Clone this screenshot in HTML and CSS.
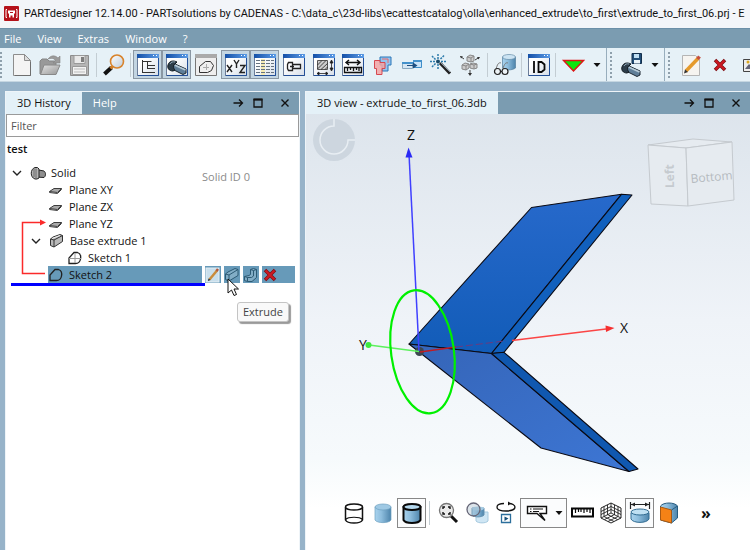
FILE: index.html
```html
<!DOCTYPE html>
<html lang="en">
<head>
<meta charset="utf-8">
<title>PARTdesigner</title>
<link rel="stylesheet" href="styles.css">
</head>
<body>
<svg class="defs" aria-hidden="true">
  <defs>
    <linearGradient id="gBar" x1="0" x2="1" y1="0" y2="0"><stop offset="0" stop-color="#1450a8"/><stop offset="1" stop-color="#5b9be6"/></linearGradient>
    <linearGradient id="gPage" x1="0" x2="1" y1="0" y2="1"><stop offset="0.3" stop-color="#fff"/><stop offset="1" stop-color="#d6dee8"/></linearGradient>
    <linearGradient id="gGrey" x1="0" x2="1" y1="0" y2="1"><stop offset="0" stop-color="#e4e4e4"/><stop offset="1" stop-color="#979797"/></linearGradient>
    <linearGradient id="gCyl" x1="0" x2="1" y1="0" y2="0"><stop offset="0" stop-color="#a9d3ee"/><stop offset="0.4" stop-color="#8dbddd"/><stop offset="1" stop-color="#4d84ab"/></linearGradient>
    <linearGradient id="gLens" x1="0" x2="1" y1="0" y2="1"><stop offset="0" stop-color="#fff"/><stop offset="1" stop-color="#bccbd8"/></linearGradient>
    <symbol id="win" viewBox="0 0 24 24">
      <rect x="1.5" y="1.5" width="21" height="21" fill="url(#gPage)" stroke="#6b7c98"/>
      <path d="M22.5 3v19.5H2" fill="none" stroke="#234f97"/>
      <rect x="1" y="1" width="22" height="4" fill="url(#gBar)"/>
      <path d="M17 2.5h1M20 2.5h1" stroke="#fff"/>
    </symbol>
    <symbol id="screw" viewBox="0 0 24 24">
      <path d="M9 9.500 21 15v4l-3 1.500L7 15z" fill="#5f7e98" stroke="#1c2730"/>
      <path d="M9.500 11 20.500 16" stroke="#b7cbd8" stroke-width="1.500"/>
      <path d="M3 11c1-4 5-5 9-3l-2 2c-2 1-2 4 0 6l-2 1c-4 0-6-3-5-6z" fill="#2c3c48" stroke="#111a20"/>
      <path d="M5 10c1-2 3-2.500 5-2" stroke="#91a9ba" fill="none"/>
    </symbol>
    <symbol id="plane" viewBox="0 0 16 16"><path d="M1.500 9.500 6 6.500h7.500l-4 4z" fill="#a9a9a9" stroke="#3e3e3e"/><path d="M1.500 9.500v1l8 1 4-4v-1" fill="none" stroke="#3e3e3e"/></symbol>
    <symbol id="block" viewBox="0 0 16 16"><path d="M1.500 6 4 4l7-2.500 2.500 1v6L5 14l-3.500-1.500z" fill="#b9b9b9" stroke="#333"/><path d="M1.500 6 5 7v7M5 7l8.500-4.500" fill="none" stroke="#333"/><path d="M3 5.500 11 2.500" stroke="#eee"/></symbol>
    <symbol id="sketch" viewBox="0 0 16 16"><path d="M2 13.500V8l5-5.500h3.500c3 1 3.500 4 3 6.500-.5 3-2.500 4.500-5 4.500z" fill="none" stroke="#222" stroke-width="1.300"/></symbol>
    <symbol id="pencil" viewBox="0 0 16 16"><rect x="1" y="1" width="13" height="14" fill="#c9dfec" stroke="#e4eef4"/><path d="M4.500 12.500 12 3.500" stroke="#c98c3c" stroke-width="2.500"/><path d="m3 14 .5-2.500 2 1.500z" fill="#222"/><path d="m11.500 4 1.500-2" stroke="#b4583a" stroke-width="2.500"/></symbol>
    <symbol id="cross" viewBox="0 0 16 16"><path d="m3 3 10 10M13 3 3 13" stroke="#7d0c12" stroke-width="3.500"/><path d="m3.500 3.500 9 9M12.500 3.500l-9 9" stroke="#cc1922" stroke-width="2.200"/></symbol>
    <symbol id="dock" viewBox="0 0 12 12"><path d="M1.500 6h9M7 2.500 10.500 6 7 9.500" fill="none" stroke="#111" stroke-width="1.300"/></symbol>
    <symbol id="maxi" viewBox="0 0 12 12"><path d="M2 2.500h8v7.500H2z" fill="none" stroke="#111" stroke-width="1.300"/><path d="M1.500 2.500h9" stroke="#111" stroke-width="2"/></symbol>
    <symbol id="close" viewBox="0 0 12 12"><path d="m2.500 2.500 7 7M9.500 2.500l-7 7" stroke="#111" stroke-width="1.400"/></symbol>
    <symbol id="drop" viewBox="0 0 8 8"><path d="M.5 2h7L4 6z" fill="#111"/></symbol>
  </defs>
</svg>

<header class="titlebar">
  <svg class="logo" viewBox="0 0 16 16"><rect width="15" height="15" rx="1" fill="#b5121b"/><path d="M3 3.500H2v8h1M12 3.500h1v8h-1" fill="none" stroke="#fff"/><path d="M4 4.500h7v3h-1v4H8.500v-2h-2v2H5v-4H4z" fill="#fff"/><path d="M6 6.500h3" stroke="#b5121b"/></svg>
  <h1 class="title">PARTdesigner 12.14.00 - PARTsolutions by CADENAS - C:\data_c\23d-libs\ecattestcatalog\olla\enhanced_extrude\to_first\extrude_to_first_06.prj - E</h1>
</header>

<nav class="menubar">
  <button>File</button><button>View</button><button>Extras</button><button>Window</button><button>?</button>
</nav>

<div class="toolbars">
  <div class="toolbar">
    <span class="grip"></span>
    <div class="group">
      <button class="tool" aria-label="New"><svg viewBox="0 0 24 24"><path d="M4.500 1.500h11l6 6v15h-17z" fill="#f4f4f4" stroke="#8d8d8d"/><path d="M15.500 1.500v6h6z" fill="#ddd" stroke="#8d8d8d"/><path d="M6 22.500h15.500V9" fill="none" stroke="#6f6f6f"/></svg></button>
      <button class="tool" aria-label="Open"><svg viewBox="0 0 24 24"><path d="M2 21V8l2-2h5l2 2h7v5z" fill="#999" stroke="#858585"/><path d="M2.500 21.500 6 12h16l-4 9.500z" fill="url(#gGrey)" stroke="#888"/><path d="M10 6c3-4 7-4 10-1l2-2v7h-7l2.500-2.500C16 5 13 5 10 6z" fill="#9b9b9b" stroke="#858585" stroke-width=".6"/></svg></button>
      <button class="tool" aria-label="Save"><svg viewBox="0 0 24 24"><path d="M3.500 2.500h18v20h-18z" fill="#b5b5b5" stroke="#8c8c8c"/><path d="M7 2.500h11v8H7z" fill="#e9e9e9" stroke="#999"/><path d="M14 4h3v5h-3z" fill="#7d7d7d"/><path d="M5.500 13.500h14v8h-14z" fill="#f2f2f2" stroke="#999"/><path d="M7 16h11M7 19h11" stroke="#bbb"/></svg></button>
    </div>
    <span class="sep"></span>
    <button class="tool" aria-label="Search"><svg viewBox="0 0 24 24"><path d="m9.500 14.500-7 6.500" stroke="#111" stroke-width="4"/><path d="m10.500 13.500-2 2" stroke="#d07e27" stroke-width="3"/><circle cx="15" cy="8.500" r="6.500" fill="url(#gLens)" stroke="#d8832b" stroke-width="1.600"/></svg></button>
    <span class="sep"></span>
    <div class="group">
      <button class="tool on" aria-label="History tree"><svg viewBox="0 0 24 24"><use href="#win"/><path d="M6.500 7v13M6.500 8.500h9M6.500 19.500H19M11.500 9v7M11.500 12.500H19M11.500 15.500H19" fill="none" stroke="#333"/></svg></button>
      <button class="tool on" aria-label="3D view"><svg viewBox="0 0 24 24"><use href="#win"/><use href="#screw" x="0" y="1"/></svg></button>
      <button class="tool" aria-label="Sketch view"><svg viewBox="0 0 24 24"><path d="M1.500 1.500h21v21h-21z" fill="#eee" stroke="#777"/><path d="M1 1h22v4H1z" fill="#aaa"/><path d="M5.500 19.500v-6l6-5h5l3 4-2 5-4 2z" fill="none" stroke="#333"/><path d="M12.500 11v6M9 14.500h6" stroke="#aaa"/></svg></button>
    </div>
    <div class="group">
      <button class="tool on" aria-label="Variables"><svg viewBox="0 0 24 24"><use href="#win"/><path d="m3 12 5 7M8 12l-5 7M10 7l2.500 4L15 7M12.500 11v4M16 12.500h5l-5 7h5" fill="none" stroke="#222" stroke-width="1.400"/></svg></button>
      <button class="tool on" aria-label="Table"><svg viewBox="0 0 24 24"><use href="#win"/><path d="M8 6h4v16H8z" fill="#f5ebb5"/><path d="M3 7.500h18M3 10.500h18M3 13.500h18M3 16.500h18M3 19.500h18" stroke="#66727f" stroke-dasharray="4 1"/></svg></button>
      <button class="tool" aria-label="Bolt"><svg viewBox="0 0 24 24"><use href="#win"/><path d="M6.500 9.500h4v8h-4l-1-2v-4zM10.500 11.500h8v4h-8M8 13.500h4" fill="none" stroke="#222" stroke-width="1.300"/></svg></button>
    </div>
    <div class="group">
      <button class="tool" aria-label="Hatching"><svg viewBox="0 0 24 24"><use href="#win"/><path d="M5.500 7.500h10v9h-10z" fill="#ccc" stroke="#555"/><path d="m5.500 12 4.500-4.500M5.500 16 14 7.500M9 16.500l6.500-6M13 16.500l2.500-2.500M5 20.500h11M5 20.500l2-1.500v3zM16 20.500l-2-1.500v3zM19.500 8v9M19.500 7 18 10h3zM19.500 18 18 15h3z" stroke="#222" stroke-width=".8"/></svg></button>
      <button class="tool" aria-label="Measure"><svg viewBox="0 0 24 24"><use href="#win"/><path d="M5 9.500h14M8 7 5 9.500 8 12M16 7l3 2.500L16 12" fill="none" stroke="#111" stroke-width="1.400"/><path d="M3.500 14.500h17v5h-17zM6.500 15v3M9.500 15v2M12.500 15v3M15.500 15v2M18 15v3" fill="none" stroke="#111" stroke-width="1.300"/></svg></button>
      <button class="tool" aria-label="Compare"><svg viewBox="0 0 24 24"><path d="M10 4h11v8h-3v6h-6v-6h-2z" fill="#95c3ee" stroke="#2a77b8"/><path d="M4.500 7.500H10v2h5v6h-3v6H6.500v-6h-2z" fill="#f2a5a5" fill-opacity=".85" stroke="#d64850"/><path d="M12 6h6v4" fill="none" stroke="#e86b6b"/></svg></button>
    </div>
    <div class="group">
      <button class="tool" aria-label="Connect"><svg viewBox="0 0 24 24"><path d="M2.500 9.500h10v6h-10z" fill="#d5e6f3" stroke="#89a8bf"/><path d="M13.500 7.500h8v7h-8z" fill="#c9e3f8" stroke="#3d8ec9"/><path d="M2 10h11M13 8h9" stroke="#4491cb" stroke-width="2"/><path d="M7 12h6V9.500l4.500 3-4.500 3V13H7z" fill="#1d4e80"/></svg></button>
      <button class="tool" aria-label="Wizard"><svg viewBox="0 0 24 24"><path d="m11 10 10 10.500" stroke="#222" stroke-width="3"/><path d="m12 10 9 9" stroke="#8b98a2"/><path d="M9 1v5M9 11v5M1 8.500h5M12 8.500h6M3 3l4 4M15 2.500 11 6.500M3 14l4-4" stroke="#2d7bab" stroke-width="1.500" stroke-dasharray="2 1"/><circle cx="9" cy="8.500" r="2" fill="#174968"/></svg></button>
      <button class="tool" aria-label="Explode"><svg viewBox="0 0 24 24"><path d="m9 4 3-2 4 1v5l-3 1-4-1zM4 12l3-2 4 1v4l-3 2-4-1zM12 11l3-1 4 1v4l-3 1-4-1z" fill="#ccc" stroke="#888"/><path d="m9 4 4 1 3-2M13 5v4M4 12l4 1 3-2M8 13v4M12 11l4 1 3-1M16 12v4" fill="none" stroke="#888"/><path d="M6 6 2.500 3.500M17 7l4-2.500M12 17v4" stroke="#444"/><path d="m2 3 3 .5-2 2zM22 4l-3 0 1.500 2.500zM12 23l-2-3h4z" fill="#333"/></svg></button>
    </div>
    <span class="sep"></span>
    <button class="tool" aria-label="Inspect"><svg viewBox="0 0 24 24"><path d="M9.500 4v11c2 2.500 10 2.500 13 0V4z" fill="url(#gCyl)" stroke="#557f9d" stroke-width=".7"/><ellipse cx="16" cy="4" rx="6.500" ry="2.500" fill="#cce4f3" stroke="#668ca8" stroke-width=".7"/><path d="M3 17c1-6 3-8 5-7M10 16c1-5 3-7 5-6" fill="none" stroke="#777"/><circle cx="4.500" cy="18.500" r="3" fill="#edf3f6" stroke="#222" stroke-width="1.200"/><circle cx="12" cy="18.500" r="3" fill="#edf3f6" stroke="#222" stroke-width="1.200"/><path d="M7.500 18.500H9" stroke="#222"/></svg></button>
    <span class="sep"></span>
    <button class="tool" aria-label="ID"><svg viewBox="0 0 24 24"><use href="#win"/><path d="M7 8v12M11.500 9v10h3l3-2.500v-5l-3-2.500z" fill="none" stroke="#080808" stroke-width="1.800"/></svg></button>
    <span class="sep"></span>
    <button class="tool" aria-label="Filter state"><svg viewBox="0 0 24 24"><path d="M2.500 7.500h20L12.500 18z" fill="#0de70d" stroke="#dd1616" stroke-width="1.400"/></svg></button>
    <button class="tool narrow" aria-label="More states"><svg viewBox="0 0 8 8"><use href="#drop"/></svg></button>
  </div>
  <div class="toolbar">
    <span class="grip"></span>
    <button class="tool" aria-label="Export part"><svg viewBox="0 0 24 24"><use href="#screw" y="3"/><path d="M13 .5h9.500v10H13z" fill="#224e78" stroke="#132f4c"/><path d="M15 1h5v4h-5z" fill="#bfdef2"/><path d="M15 7h6v3.500h-6z" fill="#eaf3f8"/></svg></button>
    <button class="tool narrow" aria-label="Export formats"><svg viewBox="0 0 8 8"><use href="#drop"/></svg></button>
  </div>
  <div class="toolbar grow">
    <span class="grip wide"></span>
    <button class="tool" aria-label="Edit"><svg viewBox="0 0 24 24"><path d="M3.500 2.500h13l4 4v16h-17z" fill="#f6f4f0" stroke="#b5b5b5"/><path d="M7 18 19 5.500" stroke="#e59a2c" stroke-width="3.500"/><path d="m5 20.500 1-4 3 2.500z" fill="#333"/><path d="m18.500 6 2-2.500" stroke="#c64f3d" stroke-width="3.500"/></svg></button>
    <button class="tool" aria-label="Delete"><svg class="small" viewBox="0 0 16 16"><use href="#cross"/></svg></button>
    <button class="tool clip" aria-label="Image"><svg viewBox="0 0 24 24"><path d="M3.500 6.500h18v12h-18z" fill="#eee" stroke="#444"/><path d="m5 16 4-5 3 3 3-4 4 6z" fill="#667"/><circle cx="8" cy="9" r="1.500" fill="#dba820"/></svg></button>
  </div>
</div>

<main class="workspace">
  <section class="panel history">
    <div class="tabs">
      <button class="tab active">3D History</button>
      <button class="tab">Help</button>
      <div class="controls">
        <button aria-label="Dock"><svg viewBox="0 0 12 12"><use href="#dock"/></svg></button>
        <button aria-label="Maximize"><svg viewBox="0 0 12 12"><use href="#maxi"/></svg></button>
        <button class="last" aria-label="Close"><svg viewBox="0 0 12 12"><use href="#close"/></svg></button>
      </div>
    </div>
    <input class="filter" type="text" placeholder="Filter" aria-label="Filter">
    <h2 class="project">test</h2>
    <div class="tree-wrap">
      <ul class="tree">
        <li class="row l0"><svg class="chev" viewBox="0 0 10 10"><path d="m1 3 4 4 4-4" fill="none" stroke="#222" stroke-width="1.400"/></svg><svg class="ico" viewBox="0 0 16 16"><path d="M6 4.500 14 6c2 1.500 2 5 0 6.500L6 12z" fill="#8e8e8e" stroke="#222"/><path d="M5 2.500h2.500L9 4v9l-2 1H5C0 12.500 0 4 5 2.500z" fill="#b5b5b5" stroke="#222"/><path d="M4 4v8M6 3.500v10" stroke="#555" stroke-width=".8"/></svg><span>Solid</span><span class="solid-id">Solid ID 0</span></li>
        <li class="row l1"><svg class="ico" viewBox="0 0 16 16"><use href="#plane"/></svg><span>Plane XY</span></li>
        <li class="row l1"><svg class="ico" viewBox="0 0 16 16"><use href="#plane"/></svg><span>Plane ZX</span></li>
        <li class="row l1"><svg class="ico" viewBox="0 0 16 16"><use href="#plane"/></svg><span>Plane YZ</span></li>
        <li class="row l0 nested"><svg class="chev" viewBox="0 0 10 10"><path d="m1 3 4 4 4-4" fill="none" stroke="#222" stroke-width="1.400"/></svg><svg class="ico" viewBox="0 0 16 16"><use href="#block"/></svg><span>Base extrude 1</span></li>
        <li class="row l2"><svg class="ico" viewBox="0 0 16 16"><use href="#sketch"/><path d="M8 3v10M2 8.500h12" stroke="#999"/></svg><span>Sketch 1</span></li>
        <li class="row l1 selected">
          <div class="name"><svg class="ico" viewBox="0 0 16 16"><use href="#sketch"/></svg><span>Sketch 2</span></div>
          <button class="act" aria-label="Edit sketch"><svg viewBox="0 0 16 16"><use href="#pencil"/></svg></button>
          <button class="act" aria-label="Extrude"><svg viewBox="0 0 16 16"><path d="M1.500 7 4 5l7-3.500 3 1v6L5 14l-3.500-1.500z" fill="#82adc6" stroke="#2d5a74"/><path d="M1.500 7 5 8v6M5 8l9-5.500" fill="none" stroke="#2d5a74"/></svg></button>
          <button class="act" aria-label="Sweep"><svg viewBox="0 0 16 16"><path d="M1.500 9.500 6 8.500l1.500-1v-5l3-1 3 1v8L9 14.500H4.500l-3-1z" fill="#82adc6" stroke="#2d5a74"/><path d="m1.500 9.500 3 1h4l2-1.500V3.500l3-1M7.500 2.500l3 1M4.500 10.500v4" fill="none" stroke="#2d5a74"/></svg></button>
          <button class="act wide" aria-label="Delete sketch"><svg viewBox="0 0 16 16"><use href="#cross"/></svg></button>
        </li>
      </ul>
      <div class="insert-line"></div>
      <svg class="link" viewBox="0 0 26 60"><path d="M24 55.500H1.500v-51H20" fill="none" stroke="#fb2a2a" stroke-width="1.500"/><path d="m19 1.500 6 3-6 3z" fill="#fb2a2a"/></svg>
      <svg class="cursor" viewBox="0 0 13 19"><path d="M1 1v14l3.500-3 2.500 5.500 2.500-1-2.500-5.500h4.500z" fill="#fff" stroke="#111"/></svg>
      <div class="tooltip" role="tooltip">Extrude</div>
    </div>
  </section>

  <section class="panel view">
    <div class="tabs">
      <button class="tab active">3D view - extrude_to_first_06.3db</button>
      <div class="controls">
        <button aria-label="Dock"><svg viewBox="0 0 12 12"><use href="#dock"/></svg></button>
        <button aria-label="Maximize"><svg viewBox="0 0 12 12"><use href="#maxi"/></svg></button>
        <button class="last" aria-label="Close"><svg viewBox="0 0 12 12"><use href="#close"/></svg></button>
      </div>
    </div>
    <svg class="scene" viewBox="306 114 444 370" role="img" aria-label="Extruded part">
      <defs>
        <linearGradient id="gUp" x1="0" y1="0" x2="0" y2="1"><stop offset="0" stop-color="#2769cb"/><stop offset="1" stop-color="#125cb8"/></linearGradient>
        <linearGradient id="gLow" x1="0" y1="0" x2="1" y2="1"><stop offset="0" stop-color="#3565b8"/><stop offset="1" stop-color="#3d76d4"/></linearGradient>
      </defs>
      <circle cx="334" cy="140" r="21" fill="#cdd6df"/>
      <path d="M334 119v7a14 14 0 1 0 14 14h7" fill="none" stroke="#e8eef3" stroke-width="1.500"/>
      <g class="cube">
        <path d="m648 145 45-6 39 3-46 6z"/><path d="m648 145 38 3 2 58-37-2z"/><path d="m686 148 46-6 2 58-46 6z"/>
        <text class="face" transform="translate(674 188) rotate(-91)">Left</text>
        <text class="face big" transform="translate(691 183) rotate(-5)">Bottom</text>
      </g>
      <g stroke="#0a0a14" stroke-width="1.100" stroke-linejoin="round">
        <path d="m409 344 122.500-136.500 90-13.200L491.500 353.500z" fill="url(#gUp)"/>
        <path d="m621.500 194.300 10.500.7-128 157.300-12.500 1.200z" fill="#1160bd"/>
        <path d="m409 344 82.500 9.500L629 471.500 541 448z" fill="url(#gLow)"/>
        <path d="M491.500 353.500 504 352.300 638 469l-9 2.500z" fill="#1058b0"/>
      </g>
      <circle cx="419.500" cy="351.500" r="4.500" fill="#3c4750"/>
      <path d="M419 351 409 154" stroke="#4040ff" stroke-width="1.500"/><path d="m405.500 157.500 3-10 4 10z" fill="#2a2af5"/>
      <path d="m419 351.500-50-6.500" stroke="#5df05d" stroke-width="1.500"/><circle cx="368.500" cy="345" r="3" fill="#3eea3e"/>
      <path d="m420 352 36-5" stroke="#c01c24" stroke-width="1.500"/><path d="m456 347 50-6.200" stroke="#6a3a80" stroke-dasharray="7 3"/>
      <path d="m512 340.500 94-11.500" stroke="#fb4545" stroke-width="1.500"/><path d="m605.500 325.500 9 2.500-8.500 4z" fill="#f53030"/>
      <ellipse cx="422.500" cy="351.800" rx="31.400" ry="62" transform="rotate(-8 422.500 351.800)" fill="none" stroke="#00f000" stroke-width="2.200"/>
      <text class="axis" x="407" y="140">Z</text><text class="axis" x="620" y="333">X</text><text class="axis" x="359" y="350">Y</text>
    </svg>
    <div class="viewbar">
      <button class="tool" aria-label="Wireframe"><svg viewBox="0 0 24 24"><path d="M3.500 6v13c2 4 15 4 17 0V6" fill="#fff" stroke="#111" stroke-width="1.500"/><ellipse cx="12" cy="6" rx="8.500" ry="3" fill="#fff" stroke="#111" stroke-width="1.500"/><path d="M3.500 18.500c3-3 14-3 17 0" fill="none" stroke="#111" stroke-width="1.200"/></svg></button>
      <button class="tool" aria-label="Shaded"><svg viewBox="0 0 24 24"><path d="M4 6v13c2 3.500 14 3.500 16 0V6z" fill="url(#gCyl)" stroke="#6fa0c0" stroke-width=".7"/><ellipse cx="12" cy="6" rx="8" ry="3" fill="#9fc9e4" stroke="#6fa0c0" stroke-width=".7"/></svg></button>
      <button class="tool framed" aria-label="Shaded with edges"><svg viewBox="0 0 24 24"><path d="M3.500 6v13c2 4 15 4 17 0V6z" fill="url(#gCyl)" stroke="#080808" stroke-width="2"/><ellipse cx="12" cy="6" rx="8.500" ry="3" fill="#b4d8ee" stroke="#080808" stroke-width="2"/></svg></button>
      <span class="sep"></span>
      <button class="tool" aria-label="Zoom to fit"><svg viewBox="0 0 24 24"><path d="m15 15 6 6" stroke="#111" stroke-width="3"/><circle cx="10.500" cy="9.500" r="7" fill="#eaeaea" stroke="#777" stroke-width="1.300"/><path d="M7 8V6h2M12 6h2v2M14 11v2h-2M9 13H7v-2" fill="none" stroke="#111" stroke-width="1.400"/></svg></button>
      <button class="tool" aria-label="Visibility"><svg viewBox="0 0 24 24"><path d="M11 11v9c2 2.500 10 2.500 12 0v-9z" fill="#cfe6f4" stroke="#a7cadf"/><path d="M7 7v7c2 2.500 10 2.500 12 0V7z" fill="url(#gCyl)" stroke="#6693b2"/><ellipse cx="13" cy="7.500" rx="6" ry="2" fill="#a6cce4"/><circle cx="8.500" cy="8.500" r="6.500" fill="#9bb3c2" fill-opacity=".35" stroke="#667" stroke-width="1.300"/></svg></button>
      <button class="tool" aria-label="Animate rotation"><svg viewBox="0 0 24 24"><path d="M10 2.500c-4 0-7 1.300-7 3.500 0 2.500 4 4 9 4s9-1.500 9-4c0-2-3-3.500-6-3.500" fill="none" stroke="#111" stroke-width="1.300"/><path d="m14 .5 3 2-3 2z" fill="#111"/><path d="M7.500 13.500h9v8h-9z" fill="#fff" stroke="#2c6f9c" stroke-width="1.300"/><path d="m10.500 15.500 4 2-4 2.500z" fill="#174f78"/></svg></button>
      <button class="tool framed split" aria-label="Labels"><svg viewBox="0 0 24 24"><path d="M2.500 5.500h19v7H15l5 7-8-7H2.500z" fill="#fff" stroke="#111" stroke-width="1.400"/><path d="M5 8h1.500M8 8h10M5 10.500h1.500M8 10.500h6" stroke="#111"/></svg><svg class="arrow" viewBox="0 0 8 8"><use href="#drop"/></svg></button>
      <button class="tool" aria-label="Ruler"><svg viewBox="0 0 24 24"><path d="M2 7.500h21v8H2z" fill="#fff" stroke="#080808" stroke-width="2"/><path d="M5.500 8v4M8.500 8v3M11 8v3M14 8v4M17 8v3M20 8v4" stroke="#080808" stroke-width="1.200"/></svg></button>
      <button class="tool" aria-label="Mesh"><svg viewBox="0 0 24 24"><path d="m12 2 10 5v10l-10 5-10-5V7z" fill="#fff" stroke="#222"/><path d="M12 2v10L2 17M12 12l10 5M2 10.500l10-5 10 5M2 13.500l10-5 10 5M5 5.500v10M8.500 4v10M15.500 4v10M19 5.500v10M5 15.500l10 5M8.500 13.500l10 5M15.500 13.500l-10 5M19 15.500l-10 5" fill="none" stroke="#222" stroke-width=".9"/></svg></button>
      <button class="tool framed" aria-label="Dimensions"><svg viewBox="0 0 24 24"><path d="M3 12v6c2 4.500 16 4.500 18 0v-6z" fill="url(#gCyl)" stroke="#316b91"/><ellipse cx="12" cy="11" rx="9" ry="3" fill="#bfe0f3" stroke="#316b91"/><path d="M2.500 1v7M21.500 1v7M3 3.500h18" stroke="#222" stroke-width="1.200"/><path d="m3 3.500 4-2v4zM21 3.500l-4-2v4z" fill="#222"/></svg></button>
      <button class="tool" aria-label="Cross section"><svg viewBox="0 0 24 24"><path d="M3.500 5c3-4 14-4 17 0v12l-6 5-11-3z" fill="url(#gCyl)" stroke="#275c80"/><path d="m3.500 6 11 3v13l-11-3z" fill="#f58216" stroke="#a85a14"/><path d="M14.500 9 20.500 5" stroke="#275c80"/></svg></button>
      <button class="more">»</button>
    </div>
  </section>
</main>
</body>
</html>
```
FILE: styles.css
```css
* { box-sizing: border-box; }

body {
  margin: 0;
  height: 100vh;
  display: flex;
  flex-direction: column;
  overflow: hidden;
  background: #97b3c9;
  color: #111;
  font: 11px/16px "Open Sans", "Noto Sans", sans-serif;
}

button {
  margin: 0;
  padding: 0;
  border: 0;
  background: none;
  color: inherit;
  font: inherit;
}

svg { display: block; flex: none; }
.defs { position: absolute; width: 0; height: 0; }

/* Title and menu */
.titlebar {
  display: flex;
  align-items: center;
  gap: 4px;
  height: 28px;
  padding-left: 4px;
  background: #f3f5f9;
}
.logo { width: 16px; height: 16px; }
.title {
  flex: 1;
  min-width: 0;
  margin: 0;
  overflow: hidden;
  font-family: Roboto, "Open Sans", sans-serif;
  font-size: 11px;
  font-weight: 400;
  white-space: nowrap;
}
.menubar {
  display: flex;
  gap: 16px;
  height: 20px;
  padding-left: 4px;
  background: #7b9cb1;
  border-top: 1px solid #6c8fa8;
  color: #fff;
}

/* Main toolbars */
.toolbars { display: flex; height: 34px; background: #e6f1f7; border-bottom: 1px solid #c5d6e1; }
.toolbar {
  display: flex;
  flex: none;
  align-items: center;
  border-right: 1px solid #98aebd;
}
.toolbar.grow { flex: 1; min-width: 0; overflow: hidden; border-right: 0; }
.grip {
  flex: none;
  width: 2px;
  height: 26px;
  margin: 0 4px 0 3px;
  background: repeating-linear-gradient(#8fa0ac 0 2px, transparent 2px 4px);
}
.grip.wide { margin-right: 6px; }
.toolbar:first-child .grip { margin: 0 4px 0 0; }
.group { display: flex; margin-right: 1px; }
.sep { flex: none; width: 1px; height: 24px; margin: 0 2px; background: #c3cdd3; }
.tool {
  display: flex;
  flex: none;
  align-items: center;
  justify-content: center;
  width: 29px;
  height: 29px;
}
.tool svg { width: 24px; height: 24px; }
.tool svg.small { width: 16px; height: 16px; }
.tool.on { background: #c3d5e2; border: 1px solid #8a97a3; }
.tool.clip { flex: 0 1 29px; min-width: 0; justify-content: flex-start; padding-left: 6px; overflow: hidden; }
.tool.narrow { width: 19px; }
.tool.narrow svg, .tool svg.arrow { width: 8px; height: 8px; }

/* Dock panels */
.workspace {
  display: flex;
  flex: 1;
  gap: 5px;
  min-height: 0;
  padding: 9px 0 0 5px;
}
.panel { display: flex; flex-direction: column; border: 1px solid #eef4f8; border-bottom: 0; }
.history { flex: 0 0 295px; background: #fff; }
.view { flex: 1; min-width: 0; background: linear-gradient(#dbe3eb, #eff3f8 50%, #f6fafc 80%, #fff 91%); border-right: 0; }
.tabs { display: flex; flex: none; height: 22px; background: #7b9cb1; color: #fff; }
.tab { padding: 0 11px; }
.tab.active { background: #e4f1f8; color: #111; }
.controls { display: flex; align-items: center; gap: 8px; margin-left: auto; padding-right: 8px; }
.controls svg { width: 12px; height: 12px; }
.controls .last { margin-left: 7px; }

/* History tree */
.filter {
  height: 23px;
  padding: 0 4px;
  border: 1px solid #9a9a9a;
  background: #fff;
  font: inherit;
}
.filter::placeholder { color: #555; opacity: 1; }
.project { margin: 4px 0 0 1px; padding-bottom: 7px; font-size: 11px; line-height: 16px; font-weight: 600; }
.tree-wrap { position: relative; }
.tree { margin: 0; padding: 0; list-style: none; }
.row { display: flex; align-items: center; height: 17px; white-space: nowrap; }
.ico { width: 16px; height: 16px; margin-right: 5px; }
.chev { width: 10px; height: 10px; margin-right: 8px; }
.l0 { padding-left: 6px; }
.l0.nested { padding-left: 25px; }
.l1 { padding-left: 42px; }
.l2 { padding-left: 61px; }
.solid-id { margin: 8px 49px 0 auto; color: #8b8b8b; }
.selected { gap: 3px; padding-right: 4px; }
.name { display: flex; flex: 1; align-items: center; height: 17px; background: #679ab9; }
.act { width: 16px; height: 17px; background: #679ab9; }
.act.wide { width: 33px; }
.act svg { width: 16px; height: 16px; }
.insert-line { width: 194px; height: 3px; margin-left: 5px; background: #00f; position: relative; }
.link { position: absolute; left: 15px; top: 54px; width: 26px; height: 60px; }
.cursor { position: absolute; left: 221px; top: 114px; width: 13px; height: 19px; }
.tooltip {
  position: absolute;
  left: 231px;
  top: 138px;
  padding: 1px 5px;
  border: 1px solid #c4c4c4;
  border-radius: 3px;
  background: #f9f9f9;
  box-shadow: 2px 2px 1px #999;
  color: #444;
}

/* 3D view */
.scene { flex: 1; width: 100%; min-height: 0; }
.axis { font-size: 14px; fill: #111; }
.cube path { fill: #e6ebf0; stroke: #c5cacf; }
.face { font-size: 12px; font-weight: 700; fill: #c5cacf; }
.face.big { font-size: 12px; font-weight: 400; fill: #b5babf; }
.viewbar { display: flex; flex: none; align-items: center; padding: 14px 0 22px 33px; }
.viewbar .sep { margin: 0 3px; }
.viewbar .tool { height: 30px; }
.viewbar .framed { border: 1px solid #888; background: #fbfcfd; }
.viewbar .split { width: 47px; gap: 6px; }
.more { margin-left: 18px; font-size: 16px; font-weight: 700; }
```
